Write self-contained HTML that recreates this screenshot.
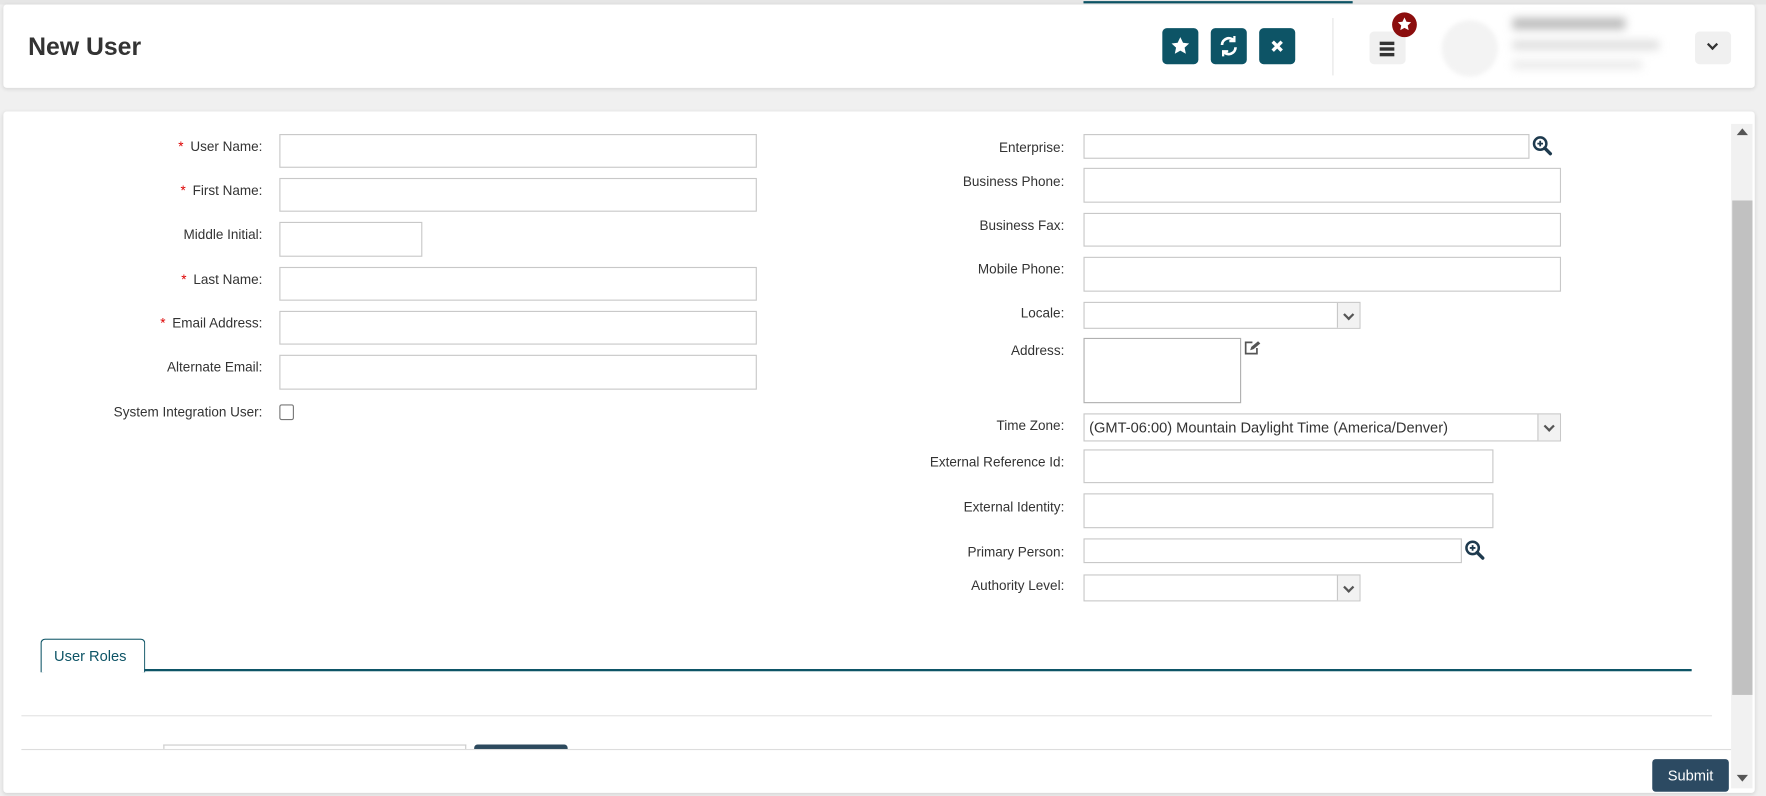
<!DOCTYPE html>
<html><head><meta charset="utf-8"><style>
html,body{margin:0;padding:0;width:1766px;height:796px;overflow:hidden;background:#f0f0f0;font-family:"Liberation Sans",sans-serif;}
#w{position:absolute;left:0;top:0;width:1568px;height:707px;transform:scale(1.12628);transform-origin:0 0;}
.a{position:absolute;}
.card{background:#fff;box-shadow:0 1px 4px rgba(0,0,0,.12);border-radius:3px;}
.lbl{position:absolute;font-size:12px;color:#333;text-align:right;}
.lbl b{color:#d00;font-weight:normal;margin-right:6px;}
.in{position:absolute;border:1px solid #c8c8c8;background:#fff;box-sizing:border-box;}
.btn{position:absolute;width:32px;height:32px;background:#0d5466;border-radius:4px;top:25px;}
.sel{position:absolute;border:1px solid #c8c8c8;box-sizing:border-box;background:#fff;}
.sel .ar{position:absolute;right:0;top:0;bottom:0;width:19px;border-left:1px solid #c8c8c8;background:#f2f2f2;}
.sel .ar:after{content:"";position:absolute;left:6px;top:7px;width:5px;height:5px;border-right:2px solid #555;border-bottom:2px solid #555;transform:rotate(45deg);}
</style></head><body><div id="w">
<div class="a" style="left:0;top:0;width:1568px;height:4px;background:#e6e6e6"></div>
<div class="a" style="left:962px;top:1px;width:239px;height:2px;background:#0d5466"></div>
<div class="a card" style="left:3px;top:4px;width:1555px;height:74px"></div>
<div class="a" style="left:25px;top:29px;font-size:22px;font-weight:bold;color:#333">New User</div>
<div class="btn" style="left:1032px"><svg width="32" height="32" viewBox="0 0 32 32"><path d="M16 8l2.4 5 5.4.6-4 3.7 1.1 5.4L16 20l-4.9 2.7 1.1-5.4-4-3.7 5.4-.6z" fill="#fff"/></svg></div>
<div class="btn" style="left:1075px"><svg width="32" height="32" viewBox="0 0 32 32" fill="none" stroke="#fff" stroke-width="2.4"><path d="M10 15a6 6 0 0 1 10.5-4M22 17a6 6 0 0 1-10.5 4"/><path d="M21 7v4.5h-4.5M11 25v-4.5h4.5" stroke-width="2"/></svg></div>
<div class="btn" style="left:1118px"><svg width="32" height="32" viewBox="0 0 32 32" stroke="#fff" stroke-width="3"><path d="M12 12l8 8M20 12l-8 8"/></svg></div>
<div class="a" style="left:1183px;top:16px;width:1px;height:51px;background:#e4e4e4"></div>
<div class="a" style="left:1216px;top:28px;width:32px;height:29px;background:#f0f0f0;border-radius:4px"><div style="position:absolute;left:9px;top:9px;width:13px;height:3px;background:#333;box-shadow:0 5px 0 #333,0 10px 0 #333"></div></div>
<div class="a" style="left:1236px;top:11px;width:22px;height:22px;border-radius:50%;background:#8b0d0d"><svg width="22" height="22" viewBox="0 0 22 22"><path d="M11 4.5l1.8 3.8 4.1.5-3 2.8.8 4.1L11 13.7l-3.7 2 .8-4.1-3-2.8 4.1-.5z" fill="#fff"/></svg></div>
<div class="a" style="left:1280px;top:18px;width:50px;height:50px;border-radius:50%;background:#f3f3f3;filter:blur(2px)"></div>
<div class="a" style="left:1343px;top:16px;width:100px;height:10px;background:#bbb;filter:blur(4px)"></div>
<div class="a" style="left:1343px;top:36px;width:130px;height:8px;background:#ddd;filter:blur(4px)"></div>
<div class="a" style="left:1343px;top:54px;width:115px;height:7px;background:#e8e8e8;filter:blur(4px)"></div>
<div class="a" style="left:1505px;top:28px;width:32px;height:29px;background:#f0f0f0;border-radius:4px"><div style="position:absolute;left:12px;top:8px;width:5px;height:5px;border-right:2px solid #333;border-bottom:2px solid #333;transform:rotate(45deg)"></div></div>

<div class="a card" style="left:3px;top:99px;width:1555px;height:605px"></div>
<div class="a" style="left:1537px;top:110px;width:19px;height:590px;background:#f1f1f1"></div>
<div class="a" style="left:1538px;top:178px;width:18px;height:439px;background:#c1c1c1"></div>
<div class="a" style="left:1542px;top:114px;width:0;height:0;border-left:5px solid transparent;border-right:5px solid transparent;border-bottom:6px solid #555"></div>
<div class="a" style="left:1542px;top:688px;width:0;height:0;border-left:5px solid transparent;border-right:5px solid transparent;border-top:6px solid #555"></div>

<div class="lbl" style="right:1335px;top:123px"><b>*</b>User Name:</div>
<div class="in" style="left:248px;top:119px;width:424px;height:30px"></div>
<div class="lbl" style="right:1335px;top:162px"><b>*</b>First Name:</div>
<div class="in" style="left:248px;top:158px;width:424px;height:30px"></div>
<div class="lbl" style="right:1335px;top:201px">Middle Initial:</div>
<div class="in" style="left:248px;top:197px;width:127px;height:31px"></div>
<div class="lbl" style="right:1335px;top:241px"><b>*</b>Last Name:</div>
<div class="in" style="left:248px;top:237px;width:424px;height:30px"></div>
<div class="lbl" style="right:1335px;top:280px"><b>*</b>Email Address:</div>
<div class="in" style="left:248px;top:276px;width:424px;height:30px"></div>
<div class="lbl" style="right:1335px;top:319px">Alternate Email:</div>
<div class="in" style="left:248px;top:315px;width:424px;height:31px"></div>
<div class="lbl" style="right:1335px;top:359px">System Integration User:</div>
<div class="in" style="left:248px;top:359px;width:13px;height:14px;border-color:#777;border-radius:2px"></div>

<div class="lbl" style="right:623px;top:124px">Enterprise:</div>
<div class="in" style="left:962px;top:119px;width:396px;height:22px"></div>
<svg class="a" style="left:1360px;top:120px" width="19" height="19" viewBox="0 0 19 19"><circle cx="7.5" cy="7.5" r="5.5" fill="none" stroke="#1e3a4e" stroke-width="2.2"/><path d="M11.5 11.5l5 5" stroke="#1e3a4e" stroke-width="3" stroke-linecap="round"/><path d="M7.5 5v5M5 7.5h5" stroke="#1e3a4e" stroke-width="1.6"/></svg>
<div class="lbl" style="right:623px;top:154px">Business Phone:</div>
<div class="in" style="left:962px;top:149px;width:424px;height:31px"></div>
<div class="lbl" style="right:623px;top:193px">Business Fax:</div>
<div class="in" style="left:962px;top:189px;width:424px;height:30px"></div>
<div class="lbl" style="right:623px;top:232px">Mobile Phone:</div>
<div class="in" style="left:962px;top:228px;width:424px;height:31px"></div>
<div class="lbl" style="right:623px;top:271px">Locale:</div>
<div class="sel" style="left:962px;top:268px;width:246px;height:24px"><div class="ar"></div></div>
<div class="lbl" style="right:623px;top:304px">Address:</div>
<div class="in" style="left:962px;top:300px;width:140px;height:58px;border-color:#b0b0b0"></div>
<svg class="a" style="left:1104px;top:302px" width="16" height="14" viewBox="0 0 16 14"><path d="M8 2H2v10h10V7" fill="none" stroke="#555" stroke-width="1.5"/><path d="M6 9l1-3 6-5 2 2-6 5z" fill="#555"/></svg>
<div class="lbl" style="right:623px;top:371px">Time Zone:</div>
<div class="sel" style="left:962px;top:367px;width:424px;height:25px"><div class="ar"></div><div style="position:absolute;left:4px;top:4px;font-size:13px;color:#333">(GMT-06:00) Mountain Daylight Time (America/Denver)</div></div>
<div class="lbl" style="right:623px;top:403px">External Reference Id:</div>
<div class="in" style="left:962px;top:399px;width:364px;height:30px"></div>
<div class="lbl" style="right:623px;top:443px">External Identity:</div>
<div class="in" style="left:962px;top:438px;width:364px;height:31px"></div>
<div class="lbl" style="right:623px;top:483px">Primary Person:</div>
<div class="in" style="left:962px;top:478px;width:336px;height:22px"></div>
<svg class="a" style="left:1300px;top:479px" width="19" height="19" viewBox="0 0 19 19"><circle cx="7.5" cy="7.5" r="5.5" fill="none" stroke="#1e3a4e" stroke-width="2.2"/><path d="M11.5 11.5l5 5" stroke="#1e3a4e" stroke-width="3" stroke-linecap="round"/><path d="M7.5 5v5M5 7.5h5" stroke="#1e3a4e" stroke-width="1.6"/></svg>
<div class="lbl" style="right:623px;top:513px">Authority Level:</div>
<div class="sel" style="left:962px;top:510px;width:246px;height:24px"><div class="ar"></div></div>

<div class="a" style="left:36px;top:567px;width:91px;height:29px;border:1px solid #0d5466;border-bottom:none;border-radius:4px 4px 0 0;background:#fff"><div style="position:absolute;left:11px;top:7px;font-size:13px;color:#0d5466">User Roles</div></div>
<div class="a" style="left:128px;top:594px;width:1374px;height:2px;background:#0d5466"></div>
<div class="a" style="left:19px;top:635px;width:1501px;height:1px;background:#e2e2e2"></div>
<div class="a" style="left:145px;top:661px;width:269px;height:4px;border:1px solid #ccc;border-bottom:none;box-sizing:border-box"></div>
<div class="a" style="left:421px;top:661px;width:83px;height:4px;background:#2d4a5e;border-radius:3px 3px 0 0"></div>
<div class="a" style="left:19px;top:665px;width:1518px;height:1px;background:#ddd"></div>
<div class="a" style="left:1467px;top:674px;width:68px;height:29px;background:#2c4a62;border-radius:3px;color:#fff;font-size:13px;text-align:center;line-height:29px">Submit</div>
</div></body></html>
